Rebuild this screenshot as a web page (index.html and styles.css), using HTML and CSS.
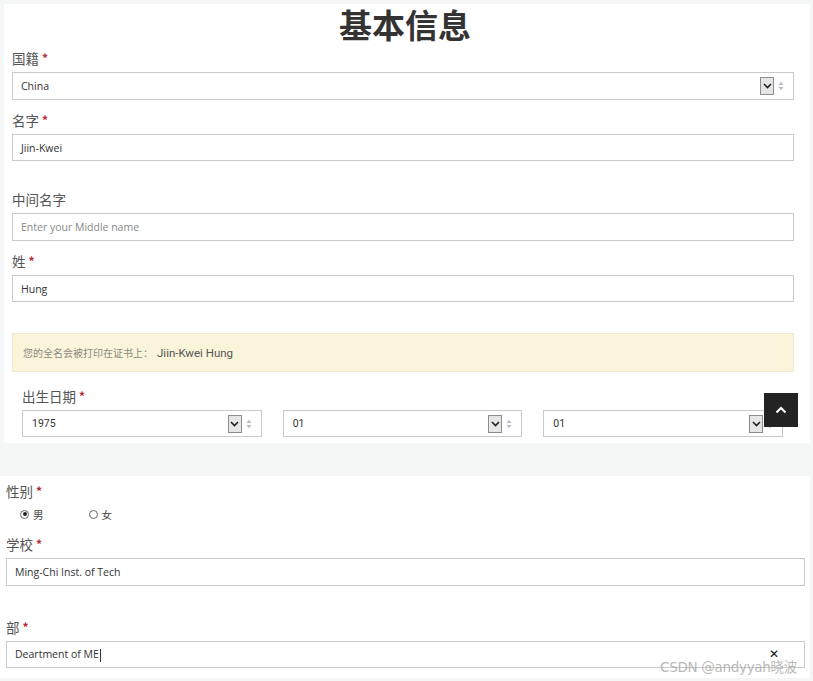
FILE: index.html
```html
<!DOCTYPE html>
<html lang="zh">
<head>
<meta charset="utf-8">
<title>基本信息</title>
<link rel="stylesheet" href="styles.css">
</head>
<body>
<div class="page">
  <section class="panel panel-top">
    <h1 class="title">基本信息</h1>

    <div class="field f-first">
      <label class="label">国籍 <span class="req">*</span></label>
      <div class="control select">
        <span class="val">China</span>
        <span class="arrows">
          <span class="arrowbox"><svg width="9" height="6" viewBox="0 0 9 6"><path d="M1 1 L4.5 4.5 L8 1" fill="none" stroke="#222" stroke-width="1.6"/></svg></span>
          <svg class="spin" width="6" height="10" viewBox="0 0 6 10"><path d="M0.5 4 L3 0.8 L5.5 4Z M0.5 6 L3 9.2 L5.5 6Z" fill="#b6bccb"/></svg>
        </span>
      </div>
    </div>

    <div class="field f-s">
      <label class="label">名字 <span class="req">*</span></label>
      <div class="control input h27"><span class="val">Jiin-Kwei</span></div>
    </div>

    <div class="field f-l">
      <label class="label">中间名字</label>
      <div class="control input h28"><span class="val ph">Enter your Middle name</span></div>
    </div>

    <div class="field f-s">
      <label class="label">姓 <span class="req">*</span></label>
      <div class="control input h27"><span class="val">Hung</span></div>
    </div>

    <div class="alert">您的全名会被打印在证书上： <span class="fullname">Jiin-Kwei Hung</span></div>

    <div class="field f-date">
      <label class="label">出生日期 <span class="req">*</span></label>
      <div class="date-row">
        <div class="control select dsel">
          <span class="val dval">1975</span>
          <span class="arrows">
            <span class="arrowbox"><svg width="9" height="6" viewBox="0 0 9 6"><path d="M1 1 L4.5 4.5 L8 1" fill="none" stroke="#222" stroke-width="1.6"/></svg></span>
            <svg class="spin" width="6" height="10" viewBox="0 0 6 10"><path d="M0.5 4 L3 0.8 L5.5 4Z M0.5 6 L3 9.2 L5.5 6Z" fill="#b6bccb"/></svg>
          </span>
        </div>
        <div class="control select dsel">
          <span class="val dval">01</span>
          <span class="arrows">
            <span class="arrowbox"><svg width="9" height="6" viewBox="0 0 9 6"><path d="M1 1 L4.5 4.5 L8 1" fill="none" stroke="#222" stroke-width="1.6"/></svg></span>
            <svg class="spin" width="6" height="10" viewBox="0 0 6 10"><path d="M0.5 4 L3 0.8 L5.5 4Z M0.5 6 L3 9.2 L5.5 6Z" fill="#b6bccb"/></svg>
          </span>
        </div>
        <div class="control select dsel">
          <span class="val dval">01</span>
          <span class="arrows">
            <span class="arrowbox"><svg width="9" height="6" viewBox="0 0 9 6"><path d="M1 1 L4.5 4.5 L8 1" fill="none" stroke="#222" stroke-width="1.6"/></svg></span>
            <svg class="spin" width="6" height="10" viewBox="0 0 6 10"><path d="M0.5 4 L3 0.8 L5.5 4Z M0.5 6 L3 9.2 L5.5 6Z" fill="#b6bccb"/></svg>
          </span>
        </div>
      </div>
    </div>

    <a class="to-top" href="#"><svg width="12" height="8" viewBox="0 0 12 8"><path d="M1.5 6.5 L6 2 L10.5 6.5" fill="none" stroke="#fff" stroke-width="2"/></svg></a>
  </section>

  <section class="panel panel-bottom">
    <div class="field f-gender">
      <label class="label">性别 <span class="req">*</span></label>
      <div class="radios">
        <span class="radio checked"></span><span class="rtext">男</span>
        <span class="radio r2"></span><span class="rtext">女</span>
      </div>
    </div>

    <div class="field f-school">
      <label class="label">学校 <span class="req">*</span></label>
      <div class="control input h28"><span class="val">Ming-Chi Inst. of Tech</span></div>
    </div>

    <div class="field f-dept">
      <label class="label">部 <span class="req">*</span></label>
      <div class="control input h27"><span class="val">Deartment of ME<span class="caret"></span></span><span class="clear">✕</span></div>
    </div>

    <div class="watermark">CSDN @andyyah晓波</div>
  </section>
</div>
</body>
</html>
```

FILE: styles.css
```css
* { box-sizing: border-box; }
html, body { margin: 0; padding: 0; }
body {
  background: #f5f6f6;
  font-family: "Noto Sans CJK SC", "Open Sans", sans-serif;
  color: #555;
  width: 813px;
  height: 681px;
  overflow: hidden;
}
.page { padding-top: 4px; }
.panel { background: #fff; position: relative; }
.panel-top {
  margin-left: 4px;
  width: 806px;
  padding: 0 16px 6px 8px;
}
.panel-bottom {
  margin-top: 33px;
  width: 810px;
  padding: 5px 5px 10px 6px;
}
.title {
  margin: 0;
  height: 40px;
  text-align: center;
  font-size: 33px;
  line-height: 40px;
  font-weight: 700;
  color: #333;
  padding-left: 4px;
}
.field { display: flex; flex-direction: column; gap: 4px; }
.f-first { margin-top: 4px; }
.f-s { margin-top: 10px; }
.f-l { margin-top: 28px; }
.f-date { margin-top: 14px; padding-left: 10px; padding-right: 11px; }
.f-gender { gap: 6px; }
.f-school { margin-top: 13px; }
.f-dept { margin-top: 31px; }
.label {
  display: block;
  height: 20px;
  font-size: 13.5px;
  line-height: 20px;
  color: #555;
  overflow: visible;
  white-space: nowrap;
}
.req { color: #b5283a; font-size: 12px; font-weight: 700; line-height: 1; vertical-align: 1px; }
.control {
  height: 28px;
  border: 1px solid #cacaca;
  background: #fff;
  display: flex;
  align-items: center;
  padding-left: 8px;
  font-family: "Open Sans", sans-serif;
  font-size: 10.5px;
  color: #333;
  position: relative;
}
.h27 { height: 27px; }
.h28 { height: 28px; }
.val { flex: 1; }
.ph { color: #888; }
.arrows { display: flex; align-items: center; gap: 4px; padding-right: 9px; }
.arrowbox {
  width: 14px; height: 18px;
  border: 1px solid #8d8d8d;
  background: #e6e6e6;
  display: flex; align-items: center; justify-content: center;
}
.spin { display: block; }
.alert {
  margin-top: 31px;
  height: 39px;
  background: #faf4db;
  border: 1px solid #f1ead0;
  display: flex;
  align-items: center;
  padding-left: 10px;
  font-size: 10px;
  color: #8a8a80;
}
.fullname { font-family: "Roboto", sans-serif; font-size: 11.5px; color: #555; margin-left: 4px; }
.date-row { display: flex; gap: 21px; }
.dsel { flex: 1; height: 27px; padding-left: 9px; }
.dval { font-family: "Roboto", sans-serif; font-size: 10.5px; }
.to-top {
  position: absolute;
  left: 760px;
  top: 389px;
  width: 34px;
  height: 34px;
  background: #232323;
  display: flex; align-items: center; justify-content: center;
}
.radios {
  display: flex;
  align-items: center;
  height: 14px;
  padding-left: 14px;
  font-size: 10.5px;
  color: #444;
}
.radio {
  width: 9px; height: 9px;
  border: 1px solid #666;
  border-radius: 50%;
  margin-right: 4px;
  position: relative;
}
.radio.checked::after {
  content: "";
  position: absolute;
  left: 1.5px; top: 1.5px;
  width: 4px; height: 4px;
  border-radius: 50%;
  background: #222;
}
.r2 { margin-left: 45px; }
.caret {
  display: inline-block;
  width: 1px; height: 13px;
  background: #333;
  vertical-align: middle;
  margin-left: 1px;
}
.clear {
  font-family: "DejaVu Sans", sans-serif;
  font-size: 12px;
  line-height: 12px;
  font-weight: 700;
  color: #111;
  margin-right: 25px;
  margin-bottom: 2px;
}
.watermark {
  position: absolute;
  right: 13px;
  bottom: 3px;
  font-family: "DejaVu Sans", "Noto Sans CJK SC", sans-serif;
  font-size: 13.5px;
  line-height: 15px;
  color: rgba(160,160,160,0.75);
  letter-spacing: -0.3px;
}
```
